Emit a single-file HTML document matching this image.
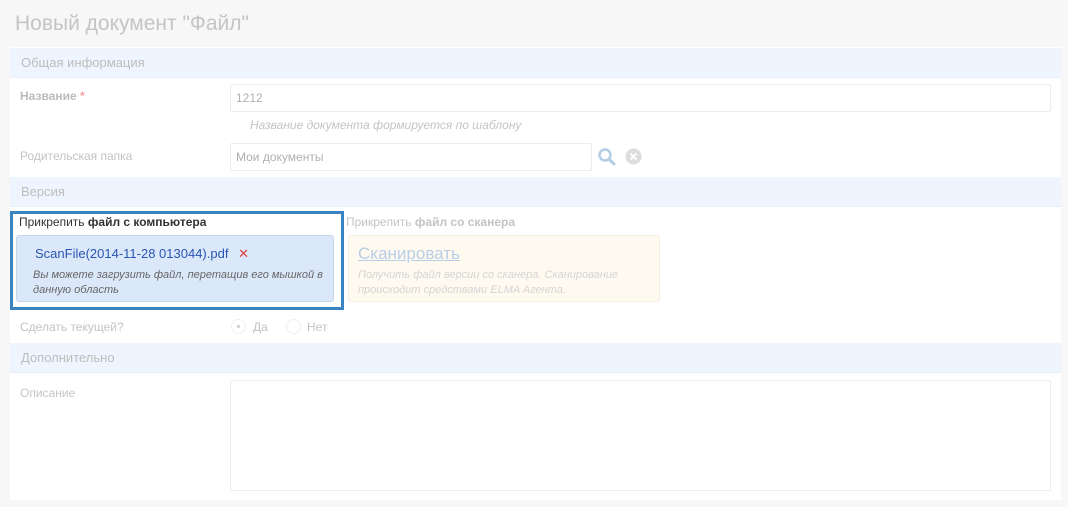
<!DOCTYPE html>
<html><head><meta charset="utf-8"><style>
*{box-sizing:border-box;margin:0;padding:0}
body{width:1068px;height:507px;background:#f7f7f7;font-family:"Liberation Sans",sans-serif;font-size:12px;color:#bbb;position:relative;overflow:hidden}
.a{position:absolute}
h1{position:absolute;left:15px;top:12px;font-size:21px;font-weight:normal;color:#c4c4c4}
.panel{left:10px;top:47px;width:1051px;height:453px;background:#fff}
.sec{left:10px;width:1051px;height:30px;background:#eef5fe;border-bottom:1px solid #e6eef8;padding:7px 11px;font-size:13px;color:#bdbdbd}
.inp{background:#fff;border:1px solid #ececec;border-radius:2px;padding:0 5px;color:#b0b0b0;font-size:12px}
</style></head><body>
<h1>Новый документ "Файл"</h1>
<div class="a panel"></div>
<div class="a sec" style="top:48px">Общая информация</div>
<div class="a" style="left:20px;top:89px;font-weight:bold;color:#bbb">Название <span style="color:#f2a0a0">*</span></div>
<div class="a inp" style="left:230px;top:84px;width:821px;height:28px;line-height:27px">1212</div>
<div class="a" style="left:250px;top:118px;font-style:italic;color:#c4c4c4">Название документа формируется по шаблону</div>
<div class="a" style="left:20px;top:149px;color:#c4c4c4">Родительская папка</div>
<div class="a inp" style="left:230px;top:143px;width:362px;height:28px;line-height:27px">Мои документы</div>
<svg class="a" style="left:597px;top:147px" width="20" height="20"><circle cx="8" cy="8" r="5.5" fill="none" stroke="#b3cde6" stroke-width="2.5"/><path d="M12 12l5 5" stroke="#b3cde6" stroke-width="3" stroke-linecap="round"/></svg>
<svg class="a" style="left:625px;top:148px" width="17" height="17"><circle cx="8.5" cy="8.5" r="8" fill="#ddd"/><path d="M5.5 5.5l6 6M11.5 5.5l-6 6" stroke="#fff" stroke-width="2"/></svg>
<div class="a sec" style="top:177px">Версия</div>
<div class="a" style="left:10px;top:211px;width:334px;height:99px;border:3px solid #3b84c4"></div>
<div class="a" style="left:19px;top:215px;color:#333"><span style="font-weight:normal">Прикрепить </span><b>файл с компьютера</b></div>
<div class="a" style="left:16px;top:235px;width:318px;height:67px;background:#dbe8fa;border:1px solid #c8d6ea;border-radius:3px"></div>
<div class="a" style="left:35px;top:246px;color:#2a55b5;font-size:13px">ScanFile(2014-11-28 013044).pdf <span style="color:#e04040;margin-left:6px">✕</span></div>
<div class="a" style="left:33px;top:268px;width:295px;font-style:italic;color:#666;font-size:11px;line-height:15px">Вы можете загрузить файл, перетащив его мышкой в данную область</div>
<div class="a" style="left:346px;top:215px;color:#c4c4c4">Прикрепить <b>файл со сканера</b></div>
<div class="a" style="left:348px;top:235px;width:312px;height:67px;background:#fffaf0;border:1px solid #f6f0e2;border-radius:3px"></div>
<div class="a" style="left:358px;top:244px;color:#b8cde6;font-size:17px;text-decoration:underline">Сканировать</div>
<div class="a" style="left:358px;top:268px;width:295px;font-style:italic;color:#d4d4d4;font-size:11px;line-height:15px">Получить файл версии со сканера. Сканирование происходит средствами ELMA Агента.</div>
<div class="a" style="left:20px;top:320px;color:#c4c4c4">Сделать текущей?</div>
<div class="a" style="left:231px;top:319px;width:15px;height:15px;border:1px solid #eee;border-radius:50%"><div style="width:3px;height:3px;background:#ccc;border-radius:50%;margin:5px"></div></div>
<div class="a" style="left:253px;top:320px;color:#c4c4c4">Да</div>
<div class="a" style="left:286px;top:319px;width:15px;height:15px;border:1px solid #eee;border-radius:50%"></div>
<div class="a" style="left:307px;top:320px;color:#c4c4c4">Нет</div>
<div class="a sec" style="top:343px">Дополнительно</div>
<div class="a" style="left:20px;top:386px;color:#c4c4c4">Описание</div>
<div class="a inp" style="left:230px;top:380px;width:821px;height:111px"></div>
</body></html>
